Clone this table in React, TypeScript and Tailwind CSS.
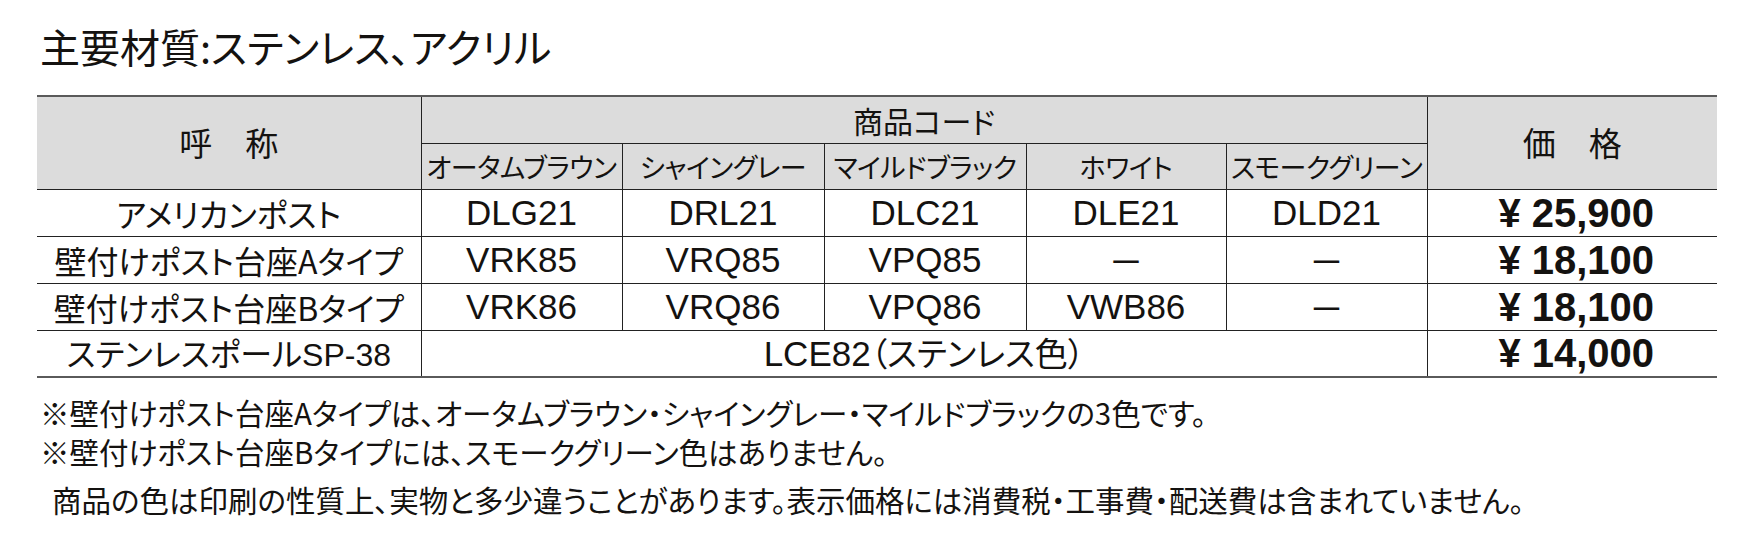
const jp = "font-['Noto_Sans_CJK_JP','Noto_Sans',sans-serif]";
const latin = "font-['Liberation_Sans','Noto_Sans_CJK_JP',sans-serif]";
const palt = "[font-feature-settings:'palt']";

const colors = ['オータムブラウン', 'シャイングレー', 'マイルドブラック', 'ホワイト', 'スモークグリーン'];

const rows = [
    { name: 'アメリカンポスト', codes: ['DLG21', 'DRL21', 'DLC21', 'DLE21', 'DLD21'], price: '¥ 25,900' },
    { name: '壁付けポスト台座Aタイプ', codes: ['VRK85', 'VRQ85', 'VPQ85', '－', '－'], price: '¥ 18,100' },
    { name: '壁付けポスト台座Bタイプ', codes: ['VRK86', 'VRQ86', 'VPQ86', 'VWB86', '－'], price: '¥ 18,100' },
];

export default function App() {
    return (
        <div className={`w-[1761px] h-[533px] bg-white text-[#141210] ${jp} ${palt}`}>
            {/* Title */}
            <div className="pl-[40px] pt-[22px] h-[95px] text-[40px] leading-[48px]">
                主要材質:ステンレス、アクリル
            </div>

            {/* Spec table */}
            <table className="ml-[37px] w-[1680px] table-fixed border-collapse border-t-2 border-b-2 border-t-[#5a5a5a] border-b-[#5a5a5a]">
                <colgroup>
                    <col className="w-[384px]" />
                    <col className="w-[201px]" />
                    <col className="w-[202px]" />
                    <col className="w-[202px]" />
                    <col className="w-[200px]" />
                    <col className="w-[201px]" />
                    <col className="w-[290px]" />
                </colgroup>
                <thead className="bg-[#dcdcdc]">
                    <tr className="h-[47px]">
                        <th rowSpan={2} className="font-normal text-[33px] border-r border-[#222] border-b">
                            呼　称
                        </th>
                        <th colSpan={5} className="font-normal text-[30px] leading-none border-b border-[#222]">
                            商品コード
                        </th>
                        <th rowSpan={2} className="font-normal text-[33px] border-l border-[#222] border-b">
                            価　格
                        </th>
                    </tr>
                    <tr className="h-[46px]">
                        {colors.map((c, i) => (
                            <th
                                key={c}
                                className={`font-normal text-[27px] leading-none whitespace-nowrap tracking-[-0.5px] border-b border-[#222] ${i < 4 ? 'border-r' : ''}`}
                            >
                                {c}
                            </th>
                        ))}
                    </tr>
                </thead>
                <tbody>
                    {rows.map(r => (
                        <tr key={r.name} className="h-[47px] border-b border-[#222]">
                            <td className="text-center text-[32px] leading-none whitespace-nowrap border-r border-[#222]">{r.name}</td>
                            {r.codes.map((code, i) => (
                                <td
                                    key={i}
                                    className={`text-center text-[35px] leading-none ${code === '－' ? jp : latin} ${i < 4 ? 'border-r border-[#222]' : ''}`}
                                >
                                    {code}
                                </td>
                            ))}
                            <td className={`text-center pl-[8px] text-[40px] leading-none font-bold border-l border-[#222] ${latin}`}>{r.price}</td>
                        </tr>
                    ))}
                    <tr className="h-[47px]">
                        <td className="text-center text-[32px] leading-none whitespace-nowrap border-r border-[#222]">
                            ステンレスポール<span className={latin}>SP-38</span>
                        </td>
                        <td colSpan={5} className="text-center text-[33px] leading-none">
                            <span className={`${latin} text-[35px]`}>LCE82</span>（ステンレス色）
                        </td>
                        <td className={`text-center pl-[8px] text-[40px] leading-none font-bold border-l border-[#222] ${latin}`}>¥ 14,000</td>
                    </tr>
                </tbody>
            </table>

            {/* Notes */}
            <div className="pl-[40px] pt-[15px] text-[29.5px] leading-[39px] whitespace-nowrap">
                <p>※壁付けポスト台座Aタイプは、オータムブラウン・シャイングレー・マイルドブラックの3色です。</p>
                <p>※壁付けポスト台座Bタイプには、スモークグリーン色はありません。</p>
                <p className="pl-[12px] mt-[9px]">商品の色は印刷の性質上、実物と多少違うことがあります。表示価格には消費税・工事費・配送費は含まれていません。</p>
            </div>
        </div>
    );
}
